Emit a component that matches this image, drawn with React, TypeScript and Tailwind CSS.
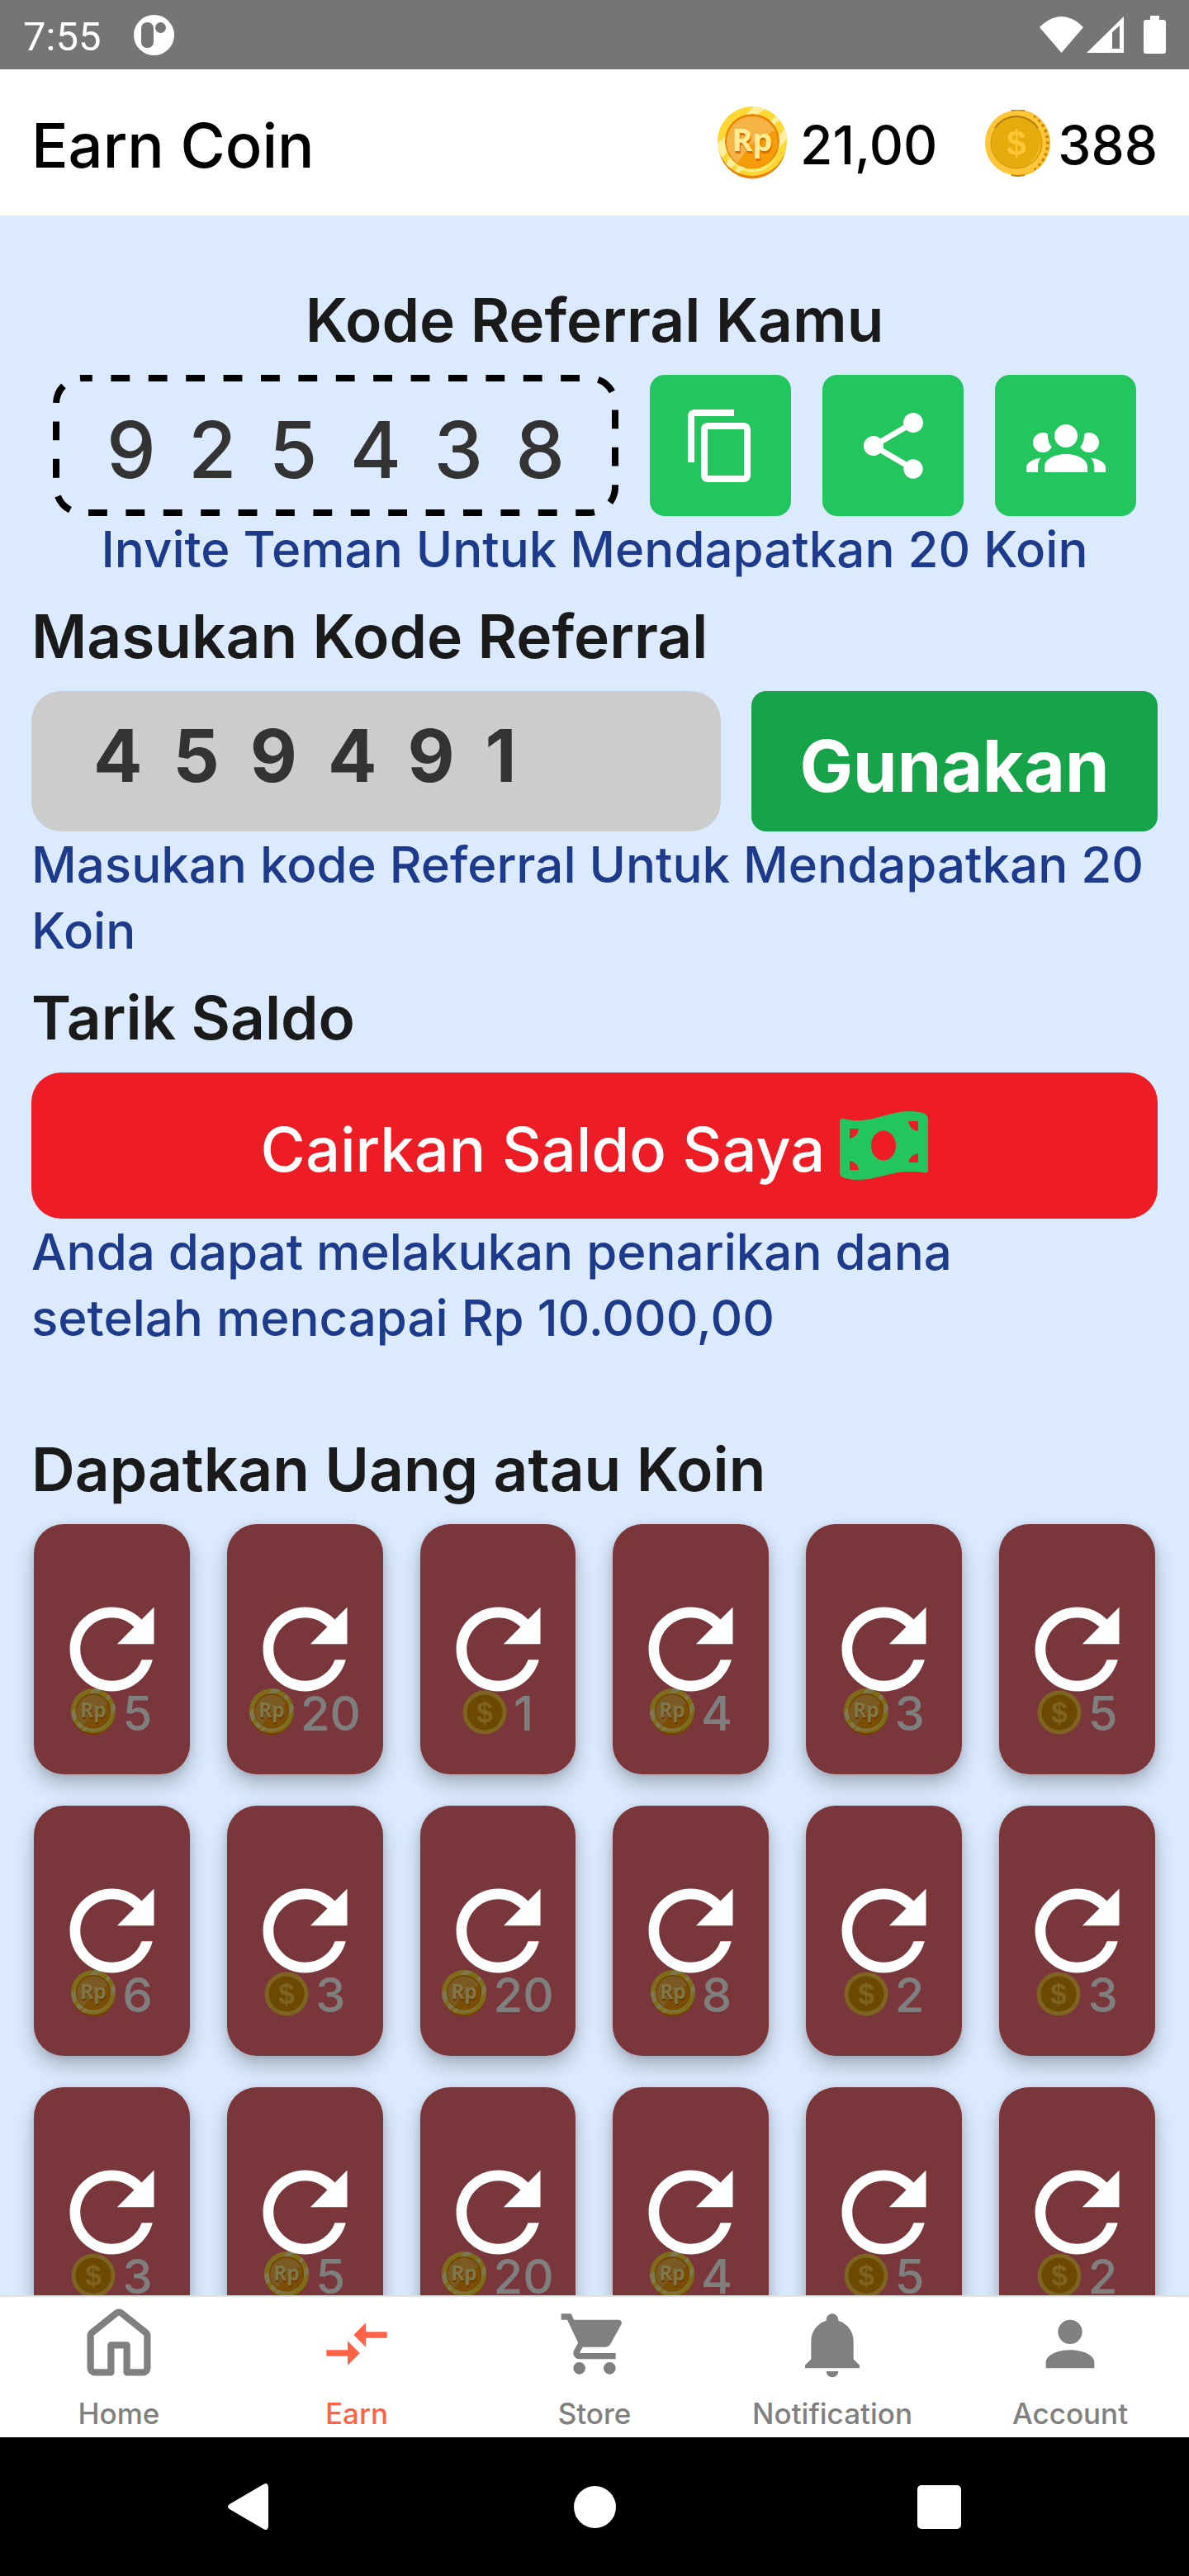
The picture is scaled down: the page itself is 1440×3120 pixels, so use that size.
import type { ReactNode } from 'react'
import { MdCompareArrows, MdContentCopy, MdRefresh, MdShare, MdShoppingCart } from 'react-icons/md'

type Kind = 'rp' | 'coin'

const rewards: { kind: Kind; value: number }[] = [
  { kind: 'rp', value: 5 },
  { kind: 'rp', value: 20 },
  { kind: 'coin', value: 1 },
  { kind: 'rp', value: 4 },
  { kind: 'rp', value: 3 },
  { kind: 'coin', value: 5 },
  { kind: 'rp', value: 6 },
  { kind: 'coin', value: 3 },
  { kind: 'rp', value: 20 },
  { kind: 'rp', value: 8 },
  { kind: 'coin', value: 2 },
  { kind: 'coin', value: 3 },
  { kind: 'coin', value: 3 },
  { kind: 'rp', value: 5 },
  { kind: 'rp', value: 20 },
  { kind: 'rp', value: 4 },
  { kind: 'coin', value: 5 },
  { kind: 'coin', value: 2 },
]

function RupiahCoin({ className, id }: { className: string; id: string }) {
  return (
    <svg viewBox="0 0 84 93" className={className} aria-hidden="true">
      <defs>
        <clipPath id={`${id}-rim`}>
          <circle cx="42" cy="42" r="42" />
        </clipPath>
        <clipPath id={`${id}-face`}>
          <circle cx="42" cy="43" r="31" />
        </clipPath>
      </defs>
      <ellipse cx="42" cy="46" rx="41" ry="41.5" fill="#e98300" />
      <circle cx="42" cy="42" r="42" fill="#fdd835" />
      <g clipPath={`url(#${id}-rim)`} fill="#ffee9c">
        <path d="M48 -4 L68 -4 L30 22 L36 8Z" />
        <path d="M72 10 L76 15 L62 28 L58 24Z" />
        <path d="M84 24 L88 34 L70 56 L66 44Z" />
        <path d="M-2 46 L10 36 L14 52 L2 66Z" />
        <path d="M8 72 L18 58 L26 64 L14 78Z" />
        <path d="M18 80 L30 70 L34 72 L22 84Z" />
      </g>
      <circle cx="42" cy="42" r="33" fill="#e98300" />
      <path d="M10 48 A32 31 0 0 0 74 48 A32 29 0 0 1 10 48Z" fill="#ffee9c" />
      <circle cx="42" cy="43" r="31" fill="#f59c0a" />
      <path d="M0 0 H84 V20 L40 46 L20 74 L0 74Z" fill="#f6b447" clipPath={`url(#${id}-face)`} />
      <text x="43" y="57" textAnchor="middle" fill="#dd6f00" className="font-['Open_Sans'] text-[38px] font-bold">
        Rp
      </text>
      <text x="42" y="54" textAnchor="middle" fill="#ffec94" className="font-['Open_Sans'] text-[38px] font-bold">
        Rp
      </text>
    </svg>
  )
}

function DollarCoin({ className }: { className: string }) {
  return (
    <svg viewBox="0 0 80 86" className={className} aria-hidden="true">
      <ellipse cx="41" cy="40" rx="38" ry="40" fill="#fdc02f" />
      <path
        d="M58 9 A37 37 0 0 1 58 71"
        fill="none"
        stroke="#c4830b"
        strokeWidth="6"
        strokeDasharray="3 4"
      />
      <ellipse cx="37" cy="40" rx="37" ry="39" fill="#ffc637" />
      <path d="M32 1 Q40 -1 48 1" fill="none" stroke="#c4830b" strokeWidth="2" />
      <path d="M32 79 Q40 81 48 79" fill="none" stroke="#c4830b" strokeWidth="2" />
      <circle cx="38" cy="40" r="31" fill="#e6ac0c" stroke="#cf9412" strokeWidth="1" />
      <path d="M12 22 A31 31 0 0 1 64 22" fill="none" stroke="#b97d0c" strokeWidth="2" />
      <path d="M66 42 A29 29 0 0 1 56 63" fill="none" stroke="#ffc637" strokeWidth="1" />
      <text x="38" y="55" textAnchor="middle" fill="#ffc637" className="font-['Liberation_Sans'] text-[42px] font-bold">
        $
      </text>
    </svg>
  )
}

function FlatDollarCoin({ className }: { className: string }) {
  return (
    <svg viewBox="0 0 54 58" className={className} aria-hidden="true">
      <circle cx="27" cy="28" r="26.5" fill="#fec640" />
      <circle cx="27" cy="28" r="21.5" fill="#d69300" />
      <text x="27" y="40" textAnchor="middle" fill="#fec640" className="font-['Liberation_Sans'] text-[35px] font-bold">
        $
      </text>
    </svg>
  )
}

function Banknote({ className }: { className: string }) {
  return (
    <svg viewBox="0 0 107 83" className={className} fill="currentColor" aria-hidden="true">
      <path
        fillRule="evenodd"
        d="M0 13 Q0 7 6 9 C12 11 17 11 23 11 C43 11 63 0 83 0 C91 0 97 0 103 3 Q107 5 107 10 V70 Q107 76 101 74 C95 73 89 73 83 73 C63 73 43 83 23 83 C15 83 9 82 4 80 Q0 78 0 74Z M53 23.5 A15 18 0 0 0 53 59.5 A15 18 0 0 0 53 23.5Z M12 21 H23 Q22 31 12 33Z M83 12 H95 V24 Q85 23 83 12Z M12 60 Q22 62 23 71 H12Z M95 51 V62 H83 Q85 53 95 51Z"
      />
    </svg>
  )
}

function StatusBar() {
  return (
    <div className="flex h-[84px] shrink-0 items-center bg-[#757575] pl-7 pr-7 text-white">
      <span className="pt-1 font-['Roboto'] text-[49px] leading-none">7:55</span>
      <svg viewBox="0 0 49 49" className="ml-10 size-[49px]" aria-hidden="true">
        <circle cx="24.5" cy="24.5" r="24.5" fill="#fff" />
        <rect x="9" y="9" width="15" height="31" rx="7" fill="#757575" />
        <circle cx="32.5" cy="15.5" r="6.5" fill="#757575" />
      </svg>
      <div className="ml-auto flex items-center">
        <svg viewBox="0 0 53 44" className="h-11 w-[53px]" fill="currentColor" aria-hidden="true">
          <path d="M26.5 44 L0 13 C8 5 17 0 26.5 0 S45 5 53 13Z" />
        </svg>
        <svg viewBox="0 0 45 44" className="ml-1 h-11 w-[45px]" fill="currentColor" aria-hidden="true">
          <path fillRule="evenodd" d="M0 44 L45 0 V44Z M31 19 V39 H40 V11Z" />
        </svg>
        <svg viewBox="0 0 27 46" className="ml-6 h-[46px] w-[27px]" fill="currentColor" aria-hidden="true">
          <path d="M8 0 H19 V5 H24 Q27 5 27 8 V43 Q27 46 24 46 H3 Q0 46 0 43 V8 Q0 5 3 5 H8Z" />
        </svg>
      </div>
    </div>
  )
}

function Heading({ children, className = '' }: { children: ReactNode; className?: string }) {
  return (
    <h2 className={`mb-3 text-[73px] leading-[108px] font-semibold text-[#1a1a1a] ${className}`}>{children}</h2>
  )
}

function Note({ children, className = '' }: { children: ReactNode; className?: string }) {
  return <p className={`text-[60px] leading-[80px] font-medium text-[#1e3a8a] ${className}`}>{children}</p>
}

function SquareButton({ label, children }: { label: string; children: ReactNode }) {
  return (
    <button
      type="button"
      aria-label={label}
      className="flex size-[171px] shrink-0 items-center justify-center rounded-[18px] bg-[#22c55e] text-white"
    >
      {children}
    </button>
  )
}

function RewardCard({ kind, value, id }: { kind: Kind; value: number; id: string }) {
  return (
    <button
      type="button"
      className="relative flex h-[303px] items-end justify-center rounded-[36px] bg-[#f46e76] pb-11 shadow-[0_12px_24px_rgba(0,0,0,0.24),0_2px_10px_rgba(0,0,0,0.1)]"
    >
      <span className="flex items-center gap-2 text-[58px] leading-[60px] font-medium text-white">
        {kind === 'rp' ? (
          <RupiahCoin id={id} className="h-[60px] w-[54px]" />
        ) : (
          <FlatDollarCoin className="h-[58px] w-[54px]" />
        )}
        {value}
      </span>
      <span className="absolute inset-0 flex items-center justify-center rounded-[36px] bg-black/50">
        <MdRefresh className="size-[153px] text-white" aria-hidden="true" />
      </span>
    </button>
  )
}

function NavItem({ label, active, children }: { label: string; active?: boolean; children: ReactNode }) {
  return (
    <a
      href="#"
      aria-current={active ? 'page' : undefined}
      className={`flex flex-1 flex-col items-center gap-[18px] pt-[13px] pb-[7px] text-[35px] leading-[44px] font-medium ${
        active ? 'text-[#ff6347]' : 'text-[#808080]'
      }`}
    >
      {children}
      <span>{label}</span>
    </a>
  )
}

export default function App() {
  return (
    <div className="flex h-screen flex-col overflow-hidden bg-[#dbeafe] font-['Inter',sans-serif]">
      <StatusBar />

      <header className="flex h-[177px] shrink-0 items-center bg-white px-[38px] pt-[6px] text-black">
        <h1 className="text-[74px] leading-[96px] font-medium">Earn Coin</h1>
        <div className="ml-auto flex items-center gap-[58px] text-[64px] leading-[84px] font-medium">
          <span className="flex items-center gap-4">
            <RupiahCoin id="balance" className="h-[93px] w-[84px]" />
            21,00
          </span>
          <span className="flex items-center gap-2">
            <DollarCoin className="h-[86px] w-[80px]" />
            388
          </span>
        </div>
      </header>

      <main className="min-h-0 flex-1 overflow-hidden px-[38px] pt-[73px]">
        <Heading className="text-center">Kode Referral Kamu</Heading>
        <div className="flex gap-[38px] px-[26px]">
          <div className="relative flex h-[171px] flex-1 items-center justify-between px-[65px] pt-[10px] text-[95px] leading-none font-medium text-[#333333]">
            <svg className="absolute inset-0 size-full" aria-hidden="true">
              <rect
                x="4"
                y="4"
                rx="31"
                className="h-[calc(100%-8px)] w-[calc(100%-8px)]"
                fill="none"
                stroke="#000"
                strokeWidth="8"
                strokeDasharray="22.8 22.6"
                strokeDashoffset="10"
              />
            </svg>
            {['9', '2', '5', '4', '3', '8'].map((digit) => (
              <span key={digit}>{digit}</span>
            ))}
          </div>
          <SquareButton label="Salin kode">
            <MdContentCopy className="size-24" />
          </SquareButton>
          <SquareButton label="Bagikan kode">
            <MdShare className="size-24" />
          </SquareButton>
          <SquareButton label="Daftar teman">
            <svg viewBox="0 0 24 24" className="size-24" fill="currentColor">
              <path d="M12,5.5A3.5,3.5 0 0,1 15.5,9A3.5,3.5 0 0,1 12,12.5A3.5,3.5 0 0,1 8.5,9A3.5,3.5 0 0,1 12,5.5M5,8C5.56,8 6.08,8.15 6.53,8.42C6.38,9.85 6.8,11.27 7.66,12.38C7.16,13.34 6.16,14 5,14A3,3 0 0,1 2,11A3,3 0 0,1 5,8M19,8A3,3 0 0,1 22,11A3,3 0 0,1 19,14C17.84,14 16.84,13.34 16.34,12.38C17.2,11.27 17.62,9.85 17.47,8.42C17.92,8.15 18.44,8 19,8M5.5,18.25C5.5,16.18 8.41,14.5 12,14.5C15.59,14.5 18.5,16.18 18.5,18.25V20H5.5V18.25M0,20V18.5C0,17.11 1.89,15.94 4.45,15.6C3.86,16.28 3.5,17.22 3.5,18.25V20H0M24,20H20.5V18.25C20.5,17.22 20.14,16.28 19.55,15.6C22.11,15.94 24,17.11 24,18.5V20Z" />
            </svg>
          </SquareButton>
        </div>
        <Note className="text-center">Invite Teman Untuk Mendapatkan 20 Koin</Note>

        <Heading className="mt-3">
          <label htmlFor="code">Masukan Kode Referral</label>
        </Heading>
        <div className="flex gap-[37px]">
          <input
            id="code"
            type="text"
            inputMode="numeric"
            defaultValue="459491"
            className="h-[170px] min-w-0 flex-1 rounded-[36px] bg-[#cccccc] pb-[14px] pl-[75px] text-[88px] font-bold tracking-[37px] text-[#333333]"
          />
          <button
            type="button"
            className="h-[170px] w-[492px] shrink-0 rounded-[18px] bg-[#16a34a] pt-3 text-[86px] leading-[104px] font-bold text-white"
          >
            Gunakan
          </button>
        </div>
        <Note>Masukan kode Referral Untuk Mendapatkan 20 Koin</Note>

        <Heading className="mt-3">Tarik Saldo</Heading>
        <button
          type="button"
          className="flex h-[177px] w-full items-center justify-center gap-[18px] rounded-[36px] bg-[#ee1c25] text-[74px] leading-[96px] font-medium text-white"
        >
          <span className="pt-2">Cairkan Saldo Saya</span>
          <Banknote className="h-[83px] w-[107px] text-[#22c55e]" />
        </button>
        <Note>
          Anda dapat melakukan penarikan dana
          <br />
          setelah mencapai Rp 10.000,00
        </Note>

        <Heading className="mt-[90px]">Dapatkan Uang atau Koin</Heading>
        <div className="grid grid-cols-6 gap-x-[45px] gap-y-[38px] px-[3px]">
          {rewards.map((reward, i) => (
            <RewardCard key={i} id={`reward-${i}`} kind={reward.kind} value={reward.value} />
          ))}
        </div>
      </main>

      <nav className="relative flex shrink-0 border-t-2 border-[#e0e0e0] bg-white">
        <NavItem label="Home">
          <svg viewBox="0 0 16 16" className="size-[88px]" fill="currentColor" aria-hidden="true">
            <path d="M6.906.664a1.749 1.749 0 0 1 2.187 0l5.25 4.2c.415.332.657.835.657 1.367v7.019A1.75 1.75 0 0 1 13.25 15h-3.5a.75.75 0 0 1-.75-.75V9H7v5.25a.75.75 0 0 1-.75.75h-3.5A1.75 1.75 0 0 1 1 13.25V6.23c0-.531.242-1.034.657-1.366l5.25-4.2Zm1.25 1.171a.25.25 0 0 0-.312 0l-5.25 4.2a.25.25 0 0 0-.094.196v7.019c0 .138.112.25.25.25H5.5V8.25a.75.75 0 0 1 .75-.75h3.5a.75.75 0 0 1 .75.75v5.25h2.75a.25.25 0 0 0 .25-.25V6.23a.25.25 0 0 0-.094-.195Z" />
          </svg>
        </NavItem>
        <NavItem label="Earn" active>
          <MdCompareArrows className="size-[88px]" aria-hidden="true" />
        </NavItem>
        <NavItem label="Store">
          <MdShoppingCart className="size-[88px]" aria-hidden="true" />
        </NavItem>
        <NavItem label="Notification">
          <svg viewBox="0 0 24 24" className="size-[88px]" fill="currentColor" aria-hidden="true">
            <path d="M21,19V20H3V19L5,17V11C5,7.9 7.03,5.17 10,4.29C10,4.19 10,4.1 10,4A2,2 0 0,1 12,2A2,2 0 0,1 14,4C14,4.1 14,4.19 14,4.29C16.97,5.17 19,7.9 19,11V17L21,19M14,21A2,2 0 0,1 12,23A2,2 0 0,1 10,21" />
          </svg>
        </NavItem>
        <NavItem label="Account">
          <svg viewBox="0 0 24 24" className="size-[88px]" fill="currentColor" aria-hidden="true">
            <path d="M12,4A4,4 0 0,1 16,8A4,4 0 0,1 12,12A4,4 0 0,1 8,8A4,4 0 0,1 12,4M12,14C16.42,14 20,15.79 20,18V20H4V18C4,15.79 7.58,14 12,14Z" />
          </svg>
        </NavItem>
      </nav>

      <div className="flex h-[168px] shrink-0 items-center justify-between bg-black px-[261px] text-white">
        <button type="button" aria-label="Back" className="flex size-[84px] items-center justify-center">
          <svg viewBox="0 0 84 84" className="size-[84px]" fill="currentColor" aria-hidden="true">
            <path d="M64 18 V66 Q63 72 58 69 L17 45 Q13 42 17 39 L58 15 Q63 12 64 18Z" />
          </svg>
        </button>
        <button type="button" aria-label="Home" className="flex size-[84px] items-center justify-center">
          <span className="size-[51px] rounded-full bg-white" />
        </button>
        <button type="button" aria-label="Recents" className="flex size-[84px] items-center justify-center">
          <span className="size-[53px] rounded-[5px] bg-white" />
        </button>
      </div>
    </div>
  )
}
